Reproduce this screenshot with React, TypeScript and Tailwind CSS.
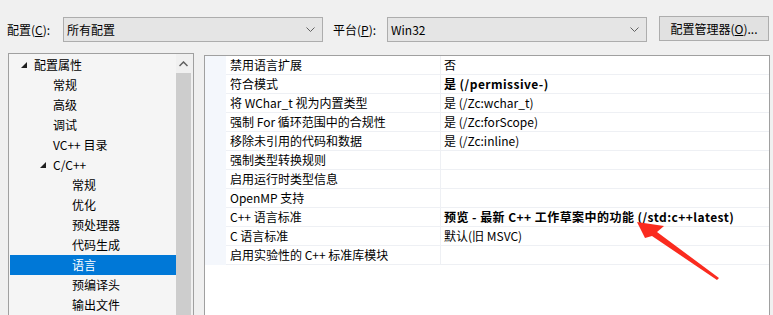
import React from 'react';

const font = { fontFamily: '"Noto Sans CJK SC", "Noto Sans", sans-serif' };

type TreeItem = { label: string; level: number; expanded?: boolean; selected?: boolean };

const treeItems: TreeItem[] = [
  { label: '配置属性', level: 0, expanded: true },
  { label: '常规', level: 1 },
  { label: '高级', level: 1 },
  { label: '调试', level: 1 },
  { label: 'VC++ 目录', level: 1 },
  { label: 'C/C++', level: 1, expanded: true },
  { label: '常规', level: 2 },
  { label: '优化', level: 2 },
  { label: '预处理器', level: 2 },
  { label: '代码生成', level: 2 },
  { label: '语言', level: 2, selected: true },
  { label: '预编译头', level: 2 },
  { label: '输出文件', level: 2 },
];

const props: { name: string; value: string; bold?: boolean }[] = [
  { name: '禁用语言扩展', value: '否' },
  { name: '符合模式', value: '是 (/permissive-)', bold: true },
  { name: '将 WChar_t 视为内置类型', value: '是 (/Zc:wchar_t)' },
  { name: '强制 For 循环范围中的合规性', value: '是 (/Zc:forScope)' },
  { name: '移除未引用的代码和数据', value: '是 (/Zc:inline)' },
  { name: '强制类型转换规则', value: '' },
  { name: '启用运行时类型信息', value: '' },
  { name: 'OpenMP 支持', value: '' },
  { name: 'C++ 语言标准', value: '预览 - 最新 C++ 工作草案中的功能 (/std:c++latest)', bold: true },
  { name: 'C 语言标准', value: '默认(旧 MSVC)' },
  { name: '启用实验性的 C++ 标准库模块', value: '' },
];

const Chevron = () => (
  <svg width="9" height="6" viewBox="0 0 9 6" className="shrink-0">
    <polyline points="0.5,0.5 4.5,4.5 8.5,0.5" fill="none" stroke="#606060" strokeWidth="1" />
  </svg>
);

const Combo = ({ text }: { text: string }) => (
  <div className="w-[260px] h-[25px] border border-[#adadad] bg-[#e5e5e5] flex items-center justify-between pl-[3px] pr-[7px]">
    <span>{text}</span>
    <Chevron />
  </div>
);

const Triangle = () => (
  <svg width="6" height="6" viewBox="0 0 6 6" className="absolute">
    <polygon points="6,0 6,6 0,6" fill="#1e1e1e" />
  </svg>
);

export default function App() {
  return (
    <div style={font} className="relative w-[773px] h-[315px] overflow-hidden bg-[#f0f0f0] text-[12px] text-black leading-none">
      {/* top bar */}
      <div className="flex items-center h-[25px] mt-[17px]">
        <span className="ml-[7px] w-[56px]">配置(<u>C</u>):</span>
        <Combo text="所有配置" />
        <span className="ml-[10px] w-[54px]">平台(<u>P</u>):</span>
        <Combo text="Win32" />
        <div className="ml-[12px] -mt-[2px] w-[110px] h-[25px] border border-[#adadad] bg-[#e1e1e1] flex items-center justify-center">
          配置管理器(<u>O</u>)...
        </div>
      </div>

      <div className="flex mt-[11px] ml-[8px]">
        {/* tree */}
        <div className="w-[186px] h-[280px] border border-[#a0a0a0] bg-[#f5f5f5] flex">
          <div className="flex-1 pt-[1px] pl-[1px]">
            {treeItems.map((t, i) => (
              <div
                key={i}
                className={`relative h-[20px] flex items-center ${t.selected ? 'bg-[#0078d7] text-white' : ''}`}
                style={{ paddingLeft: 24 + t.level * 19 }}
              >
                {t.expanded && (
                  <span className="absolute top-[7px]" style={{ left: 11 + t.level * 19 }}>
                    <Triangle />
                  </span>
                )}
                {t.label}
              </div>
            ))}
          </div>
          <div className="w-[17px] bg-[#f0f0f0] flex flex-col">
            <div className="w-[15px] h-[19px] flex items-center justify-center">
              <svg width="9" height="6" viewBox="0 0 9 6">
                <polyline points="0.5,5 4.5,1 8.5,5" fill="none" stroke="#606060" strokeWidth="1.5" />
              </svg>
            </div>
            <div className="w-[15px] flex-1 bg-[#cdcdcd]" />
          </div>
        </div>

        {/* property grid */}
        <div className="ml-[10px] mt-[2px] w-[566px] h-[280px] border border-[#a0a0a0] bg-white">
          {props.map((p, i) => (
            <div key={i} className="flex h-[19px]">
              <div className="w-[21px] bg-[#f4f7fc]" />
              <div className="w-[214px] pl-[4px] flex items-center border-b border-[#eef0f4]">{p.name}</div>
              <div
                className={`flex-1 pl-[3px] flex items-center border-b border-l border-[#eef0f4] ${
                  p.bold ? 'font-bold tracking-[0.45px]' : ''
                }`}
              >
                {p.value}
              </div>
            </div>
          ))}
        </div>
      </div>

      {/* red annotation arrow */}
      <svg className="absolute left-0 top-0 pointer-events-none" width="773" height="315">
        <polygon points="637,222 664,226 657,232 719,278 717,280 652,236 645,238" fill="#fa2b1f" />
      </svg>
    </div>
  );
}
